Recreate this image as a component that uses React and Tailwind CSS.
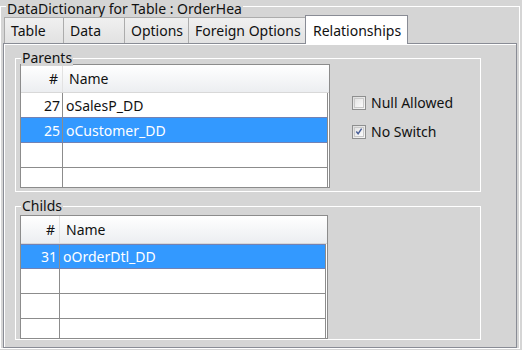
import React from 'react';

const FONT = { fontFamily: '"Noto Sans", "Open Sans", sans-serif' };

const tabs = [
  { label: 'Table', w: 'w-[60px]' },
  { label: 'Data', w: 'w-[62px]' },
  { label: 'Options', w: 'w-[65px]' },
  { label: 'Foreign Options', w: 'w-[118px]' },
];

const Tab = ({ label, w, first }) => (
  <div
    className={`${w} h-[26px] ${first ? '' : '-ml-px'} border border-b-0 border-[#acacac] bg-gradient-to-b from-[#f0f0f0] to-[#e2e2e2] flex items-center pl-[6px] text-[14px] text-[#111]`}
  >
    {label}
  </div>
);

const GroupBox = ({ title, className, children }) => (
  <div className={`relative border border-white ${className}`}>
    <span className="absolute left-[5px] -top-[9px] bg-[#d5d5d5] px-[1px] text-[14px] leading-[16px] text-[#111]">
      {title}
    </span>
    {children}
  </div>
);

const Grid = ({ rows, numW, w, headerH, selected }) => (
  <div className={`${w} h-[124px] border border-[#8c8c8c] bg-white flex flex-col overflow-hidden`}>
    <div
      className={`${headerH} flex shrink-0 border-b border-[#d8d8d8] bg-gradient-to-b from-white to-[#eceef1] text-[14px] text-[#111]`}
    >
      <div className={`${numW} shrink-0 border-r border-[#e2e2e2] flex items-center justify-end pr-[4px]`}>#</div>
      <div className="flex items-center pl-[6px]">Name</div>
    </div>
    <div className="flex-1 flex flex-col border-r border-[#8c8c8c] mr-px">
      {rows.map((r, i) => {
        const sel = i === selected;
        return (
          <div
            key={i}
            className={`h-[25px] shrink-0 flex text-[14px] ${
              sel ? 'bg-[#3399ff] text-white border-y border-[#7382b4]' : 'text-[#111] border-b border-[#8c8c8c]'
            } ${sel && i > 0 ? '-mt-px h-[26px]' : ''}`}
          >
            <div className={`${numW} shrink-0 border-r border-[#8c8c8c] flex items-center justify-end pr-[2px]`}>
              {r.n}
            </div>
            <div className="flex items-center pl-[3px]">{r.name}</div>
          </div>
        );
      })}
    </div>
  </div>
);

const Checkbox = ({ label, checked }) => (
  <div className="h-[19px] flex items-center gap-[5px] text-[14px] text-[#111]">
    <div className="w-[14px] h-[14px] border border-[#8e8f8f] bg-gradient-to-br from-[#dedede] to-[#f7f7f7] p-px">
      <div className="w-full h-full border border-[#c9c9c9] bg-gradient-to-br from-[#e4e4e4] to-[#fbfbfb] flex items-center justify-center">
        {checked && (
          <svg width="9" height="9" viewBox="0 0 9 9">
            <path d="M1.5 4.5 L3.5 7 L7.5 1.2" fill="none" stroke="#4a5f97" strokeWidth="1.6" />
          </svg>
        )}
      </div>
    </div>
    <span>{label}</span>
  </div>
);

export default function App() {
  const parents = [
    { n: '27', name: 'oSalesP_DD' },
    { n: '25', name: 'oCustomer_DD' },
    { n: '', name: '' },
    { n: '', name: '' },
  ];
  const childs = [
    { n: '31', name: 'oOrderDtl_DD' },
    { n: '', name: '' },
    { n: '', name: '' },
    { n: '', name: '' },
  ];

  return (
    <div className="w-[522px] h-[350px] bg-[#d5d5d5] pt-[6px] overflow-hidden" style={FONT}>
      <div className="relative h-[343px] w-[520px] border border-white">
        <span className="absolute left-[5px] -top-[6px] bg-[#d5d5d5] px-px text-[14px] leading-[15px] text-[#111]">
          DataDictionary for Table : OrderHea
        </span>
        <div className="pl-[2px] pt-[8px]">
          <div className="flex items-end relative z-10 pl-[1px]">
            {tabs.map((t, i) => (
              <Tab key={t.label} {...t} first={i === 0} />
            ))}
            <div className="w-[103px] h-[29px] -ml-px -mb-px bg-white border border-b-0 border-[#898c95] flex items-center pl-[7px] text-[14px] text-[#111]">
              Relationships
            </div>
          </div>
          <div className="w-[514px] h-[305px] border border-[#898c95] shadow-[inset_1px_1px_0_#ffffff] pl-[11px] pt-[14px]">
            <GroupBox title="Parents" className="w-[466px] h-[134px] pl-[4px] pt-[5px] flex">
              <Grid rows={parents} numW="w-[42px]" w="w-[310px]" headerH="h-[28px]" selected={1} />
              <div className="flex flex-col gap-[10px] pl-[22px] pt-[29px]">
                <Checkbox label="Null Allowed" />
                <Checkbox label="No Switch" checked />
              </div>
            </GroupBox>
            <GroupBox title="Childs" className="w-[466px] h-[134px] mt-[14px] pl-[4px] pt-[8px]">
              <Grid rows={childs} numW="w-[39px]" w="w-[308px]" headerH="h-[28px]" selected={0} />
            </GroupBox>
          </div>
        </div>
      </div>
    </div>
  );
}
